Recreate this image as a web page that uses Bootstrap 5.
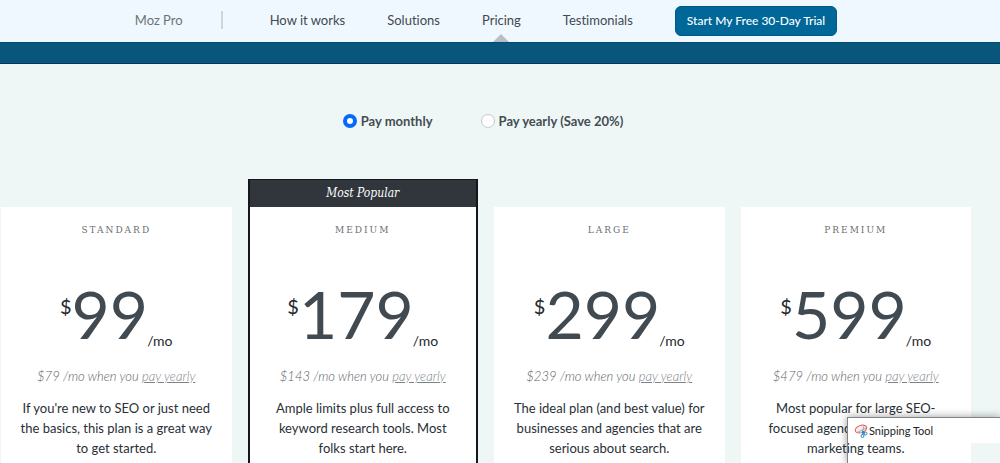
<!DOCTYPE html>
<html lang="en">
<head>
<meta charset="utf-8">
<meta name="viewport" content="width=device-width, initial-scale=1">
<title>Moz Pro Pricing</title>
<link href="https://cdn.jsdelivr.net/npm/bootstrap@5.3.0/dist/css/bootstrap.min.css" rel="stylesheet">
<style>
  body { background: #eef7f6; color: #292f36; font: 13px/20px Lato, sans-serif; font-variant-ligatures: none; height: 100vh; overflow: hidden; }
  .page-inner { padding-left: 1px; padding-right: 29px; }
  .top-bar { background: #eff8ff; height: 42px; }
  .top-links { gap: 42px; }
  .top-links a { color: #43494f; text-decoration: none; line-height: 40px; white-space: nowrap; }
  .top-links a.brand-link { color: #6c7378; margin-right: -4px; }
  .nav-divider { width: 2px; height: 18px; background: #cfd6da; margin-right: 5px; }
  .top-links a.current::after { content: ""; position: absolute; left: 50%; bottom: -2px; margin-left: -8px; border: 8px solid transparent; border-top: 0; border-bottom-color: #babfc2; }
  .trial-btn { --bs-btn-bg: #006799; --bs-btn-color: #fff; --bs-btn-border-color: #00578a; --bs-btn-hover-bg: #00557f; height: 30px; border-radius: 6px; padding: 0 11px; font-size: 12px; line-height: 28px; font-weight: 500; white-space: nowrap; margin-top: 1px; }
  .blue-band { height: 22px; background: #09567c; border-top: 1px solid #004b78; border-bottom: 1px solid #00395f; }
  .billing { gap: 48px; padding: 47px 6px 48px 0; font-weight: 700; color: #454d53; }
  .billing .form-check-input { width: 14px; height: 14px; margin: 0; border: 1px solid #c5c9cc; background-image: none; box-shadow: none; }
  .billing .form-check-input:checked { border: 4px solid #0768fd; background-color: #fff; }
  .plans { display: grid; grid-template-columns: repeat(4, minmax(0, 1fr)); gap: 16px; }
  .plan { margin-top: 28px; background: #fff; text-align: center; padding: 13px 18px 5px; }
  .plan.popular { margin-top: 0; padding: 0; border: solid #15171d; border-width: 1px 2px 0; }
  .popular-body { padding: 13px 16px 5px; }
  .ribbon { background: #31363d; color: #fff; font: italic 300 12px/27px "Roboto Slab", "DejaVu Serif Condensed", "DejaVu Serif", serif; }
  .plan h2 { font: 300 10px/20px "Roboto Slab", "DejaVu Serif Condensed", "DejaVu Serif", serif; letter-spacing: 2px; color: #6a6f73; text-transform: uppercase; margin: 0 0 34px; }
  .price { line-height: 80px; color: #23292f; }
  .price .sign { font-size: 20px; line-height: 24px; margin-top: 20px; }
  .price .amount { font-size: 66px; color: #414a51; }
  .price .per { font-size: 14px; line-height: 20px; align-self: flex-end; margin-left: -1px; margin-bottom: 3px; }
  .yearly { font-style: italic; font-weight: 300; color: #5c6266; margin: 12px 0 12px; }
  .yearly a { color: #7c8286; }
  .blurb { margin: 0; }
  .snip { position: fixed; right: 0; bottom: 0; width: 153px; height: 46px; border: solid #7f8485; border-width: 1px 0 0 1px; box-shadow: 0 0 8px rgba(0,0,0,.4); clip-path: inset(-10px 0 0 -10px); }
  .snip-title { background: #fff; height: 25px; padding-left: 6px; font-size: 11px; line-height: 24px; color: #222; gap: 1px; }
</style>
</head>
<body>
<header class="top-bar">
  <div class="page-inner">
    <nav class="top-links d-flex justify-content-center align-items-center">
      <a class="brand-link" href="#">Moz Pro</a>
      <span class="nav-divider"></span>
      <a href="#">How it works</a>
      <a href="#">Solutions</a>
      <a class="current position-relative" href="#">Pricing</a>
      <a href="#">Testimonials</a>
      <button type="button" class="btn trial-btn">Start My Free 30-Day Trial</button>
    </nav>
  </div>
</header>
<div class="blue-band"></div>
<main class="page-inner">
  <div class="billing d-flex justify-content-center">
    <div class="d-flex align-items-center gap-1"><input class="form-check-input" type="radio" name="billing" id="monthly" checked><label for="monthly">Pay monthly</label></div>
    <div class="d-flex align-items-center gap-1"><input class="form-check-input" type="radio" name="billing" id="yearly"><label for="yearly">Pay yearly (Save 20%)</label></div>
  </div>
  <div class="plans">
    <section class="plan">
      <h2>Standard</h2>
      <div class="price d-flex justify-content-center align-items-start"><span class="sign">$</span><span class="amount">99</span><span class="per">/mo</span></div>
      <p class="yearly">$79 /mo when you <a href="#">pay yearly</a></p>
      <p class="blurb">If you're new to SEO or just need the basics, this plan is a great way to get started.</p>
    </section>
    <section class="plan popular">
      <div class="ribbon">Most Popular</div>
      <div class="popular-body">
        <h2>Medium</h2>
        <div class="price d-flex justify-content-center align-items-start"><span class="sign">$</span><span class="amount">179</span><span class="per">/mo</span></div>
        <p class="yearly">$143 /mo when you <a href="#">pay yearly</a></p>
        <p class="blurb">Ample limits plus full access to keyword research tools. Most folks start here.</p>
      </div>
    </section>
    <section class="plan">
      <h2>Large</h2>
      <div class="price d-flex justify-content-center align-items-start"><span class="sign">$</span><span class="amount">299</span><span class="per">/mo</span></div>
      <p class="yearly">$239 /mo when you <a href="#">pay yearly</a></p>
      <p class="blurb">The ideal plan (and best value) for businesses and agencies that are serious about search.</p>
    </section>
    <section class="plan">
      <h2>Premium</h2>
      <div class="price d-flex justify-content-center align-items-start"><span class="sign">$</span><span class="amount">599</span><span class="per">/mo</span></div>
      <p class="yearly">$479 /mo when you <a href="#">pay yearly</a></p>
      <p class="blurb">Most popular for large SEO-focused agencies and in-house marketing teams.</p>
    </section>
  </div>
</main>
<aside class="snip">
  <div class="snip-title d-flex align-items-center">
    <svg width="14" height="14" viewBox="0 0 14 14" fill="none"><ellipse cx="7" cy="5" rx="6" ry="3.6" transform="rotate(-20 7 5)" fill="#fbeceb" stroke="#dc5a50"/><path d="M3 8.500 12 4M10 2 8 9" stroke="#a9a5a8"/><path d="M8 7.500 11 9.500M9.500 7 8.500 11" stroke="#2683c6" stroke-width="1.300"/><circle cx="11.500" cy="9.500" r="1.500" stroke="#2683c6"/><circle cx="8.500" cy="12" r="1.500" stroke="#2683c6"/></svg>
    <span>Snipping Tool</span>
  </div>
</aside>
<script src="https://cdn.jsdelivr.net/npm/bootstrap@5.3.0/dist/js/bootstrap.bundle.min.js"></script>
</body>
</html>
